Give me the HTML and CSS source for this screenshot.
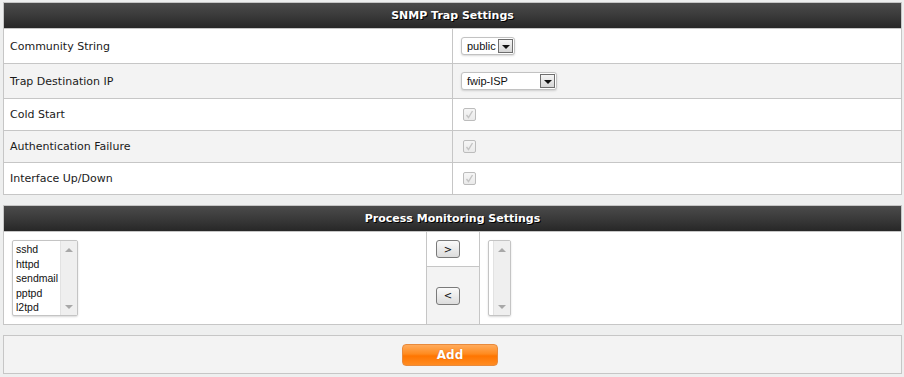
FILE: index.html
```html
<html>

<head>
    <meta charset="UTF-8" />
    <link rel="stylesheet" href="styles.css">
</head>

<body>
    <div class="panel">
        <div class="panel-head">SNMP Trap Settings</div>
        <div class="row tall">
            <div class="label">Community String</div>
            <div class="field">
                <div class="select" style="width: 54px;">
                    <span class="select-value">public</span>
                    <span class="select-arrow"></span>
                </div>
            </div>
        </div>
        <div class="row tall alt">
            <div class="label">Trap Destination IP</div>
            <div class="field">
                <div class="select" style="width: 96px;">
                    <span class="select-value">fwip-ISP</span>
                    <span class="select-arrow"></span>
                </div>
            </div>
        </div>
        <div class="row">
            <div class="label">Cold Start</div>
            <div class="field">
                <span class="check"><svg width="11" height="11" viewBox="0 0 11 11"><path d="M2.5 6 L4.5 8.5 L8.5 2" fill="none" stroke="#c4c4c4" stroke-width="1.4"/></svg></span>
            </div>
        </div>
        <div class="row alt">
            <div class="label">Authentication Failure</div>
            <div class="field">
                <span class="check"><svg width="11" height="11" viewBox="0 0 11 11"><path d="M2.5 6 L4.5 8.5 L8.5 2" fill="none" stroke="#c4c4c4" stroke-width="1.4"/></svg></span>
            </div>
        </div>
        <div class="row">
            <div class="label">Interface Up/Down</div>
            <div class="field">
                <span class="check"><svg width="11" height="11" viewBox="0 0 11 11"><path d="M2.5 6 L4.5 8.5 L8.5 2" fill="none" stroke="#c4c4c4" stroke-width="1.4"/></svg></span>
            </div>
        </div>
    </div>

    <div class="panel">
        <div class="panel-head">Process Monitoring Settings</div>
        <div class="process">
            <div class="list-cell">
                <div class="listbox">
                    <div class="list-items">
                        <div>sshd</div>
                        <div>httpd</div>
                        <div>sendmail</div>
                        <div>pptpd</div>
                        <div>l2tpd</div>
                    </div>
                    <div class="scrollbar">
                        <span class="arrow-up"></span>
                        <span class="arrow-down"></span>
                    </div>
                </div>
            </div>
            <div class="move-cell">
                <div class="move top"><button class="small-btn">&gt;</button></div>
                <div class="move bottom"><button class="small-btn">&lt;</button></div>
            </div>
            <div class="list-cell">
                <div class="listbox empty">
                    <div class="list-items"></div>
                    <div class="scrollbar">
                        <span class="arrow-up"></span>
                        <span class="arrow-down"></span>
                    </div>
                </div>
            </div>
        </div>
    </div>

    <div class="panel actions">
        <button class="add-btn">Add</button>
    </div>
</body>

</html>
```

FILE: styles.css
```css
body {
    margin: 0;
    padding: 2px 3px;
    background-color: #eeefef;
    font-family: 'DejaVu Sans', Verdana, sans-serif;
    font-size: 11px;
    color: #1a1a1a;
}

.panel {
    width: 897px;
    border: 1px solid #c6c6c6;
    background-color: #fff;
    margin-bottom: 10px;
}

.panel-head {
    height: 25px;
    line-height: 25px;
    border-bottom: 1px solid #c6c6c6;
    background: linear-gradient(#4b4b4b, #3a3a3a 50%, #272727);
    color: #fff;
    font-weight: bold;
    font-size: 11px;
    text-align: center;
    text-shadow: 1px 1px 0 #000;
}

.row {
    display: grid;
    grid-template-columns: 449px 1fr;
    height: 31px;
    border-bottom: 1px solid #c6c6c6;
}

.row:last-child {
    border-bottom: none;
}

.row.tall {
    height: 34px;
}

.row.alt {
    background-color: #f3f3f3;
}

.label {
    display: flex;
    align-items: center;
    padding-left: 6px;
    border-right: 1px solid #c6c6c6;
}

.field {
    display: flex;
    align-items: center;
    padding-left: 8px;
}

.select {
    box-sizing: border-box;
    height: 18px;
    display: flex;
    align-items: center;
    justify-content: space-between;
    border: 1px solid #c2c2c2;
    border-radius: 3px;
    background-color: #fff;
    box-shadow: 0 1px 2px rgba(0, 0, 0, 0.15);
    font-family: 'Liberation Sans', Arial, sans-serif;
    font-size: 11px;
    color: #111;
    padding-left: 5px;
    padding-right: 1px;
}

.select-arrow {
    box-sizing: border-box;
    width: 15px;
    height: 14px;
    border: 1px solid #6e6e6e;
    background: linear-gradient(#f6f6f6, #d6d6d6);
    display: flex;
    align-items: center;
    justify-content: center;
}

.select-arrow::after {
    content: "";
    border-left: 4px solid transparent;
    border-right: 4px solid transparent;
    border-top: 4px solid #111;
    margin-top: 2px;
}

.check {
    box-sizing: border-box;
    width: 13px;
    height: 13px;
    margin-left: 2px;
    border: 1px solid #bcbcbc;
    border-radius: 2px;
    background: linear-gradient(#f6f6f6, #eaeaea);
    display: flex;
    align-items: center;
    justify-content: center;
}

.process {
    display: grid;
    grid-template-columns: 423px 53px 1fr;
    height: 92px;
}

.list-cell {
    padding: 8px;
}

.list-cell:first-child {
    border-right: 1px solid #c6c6c6;
}

.listbox {
    box-sizing: border-box;
    width: 66px;
    height: 76px;
    display: flex;
    border: 1px solid #c4c4c4;
    border-radius: 2px;
    box-shadow: 0 1px 2px rgba(0, 0, 0, 0.15);
    background-color: #fff;
}

.listbox.empty {
    width: 23px;
}

.list-items {
    flex: 1;
    padding: 1px 0 0 3px;
    font-family: 'Liberation Sans', Arial, sans-serif;
    font-size: 10.5px;
    line-height: 14.6px;
    color: #111;
    white-space: nowrap;
    overflow: hidden;
}

.scrollbar {
    width: 16px;
    border-left: 1px solid #e2e2e2;
    background-color: #efefef;
    display: flex;
    flex-direction: column;
    justify-content: space-between;
    align-items: center;
    padding: 7px 0 6px;
}

.arrow-up {
    border-left: 4px solid transparent;
    border-right: 4px solid transparent;
    border-bottom: 4px solid #a8a8a8;
}

.arrow-down {
    border-left: 4px solid transparent;
    border-right: 4px solid transparent;
    border-top: 4px solid #a8a8a8;
}

.move-cell {
    display: grid;
    grid-template-rows: 35px 1fr;
    border-right: 1px solid #c6c6c6;
}

.move {
    display: flex;
    align-items: center;
    padding-left: 9px;
}

.move.top {
    border-bottom: 1px solid #c6c6c6;
}

.move.bottom {
    background-color: #f3f3f3;
}

.small-btn {
    box-sizing: border-box;
    width: 24px;
    height: 18px;
    padding: 0;
    border: 1px solid #7a7a7a;
    border-radius: 3px;
    background: linear-gradient(#fafafa, #dcdcdc);
    font-family: 'DejaVu Sans', Verdana, sans-serif;
    font-size: 10px;
    color: #111;
}

.actions {
    height: 37px;
    margin-bottom: 0;
    background-color: #f3f3f3;
    display: flex;
    align-items: center;
    justify-content: center;
}

.add-btn {
    box-sizing: border-box;
    width: 96px;
    height: 22px;
    margin-right: 5px;
    border: 1px solid #e88a3c;
    border-radius: 4px;
    background: linear-gradient(#ffab5c, #ff8a1e 45%, #ff7500 55%, #ff8c22);
    color: #fff;
    font-family: 'DejaVu Sans', Verdana, sans-serif;
    font-weight: bold;
    font-size: 12px;
    text-shadow: 0 0 1px #c85a00;
}
```
